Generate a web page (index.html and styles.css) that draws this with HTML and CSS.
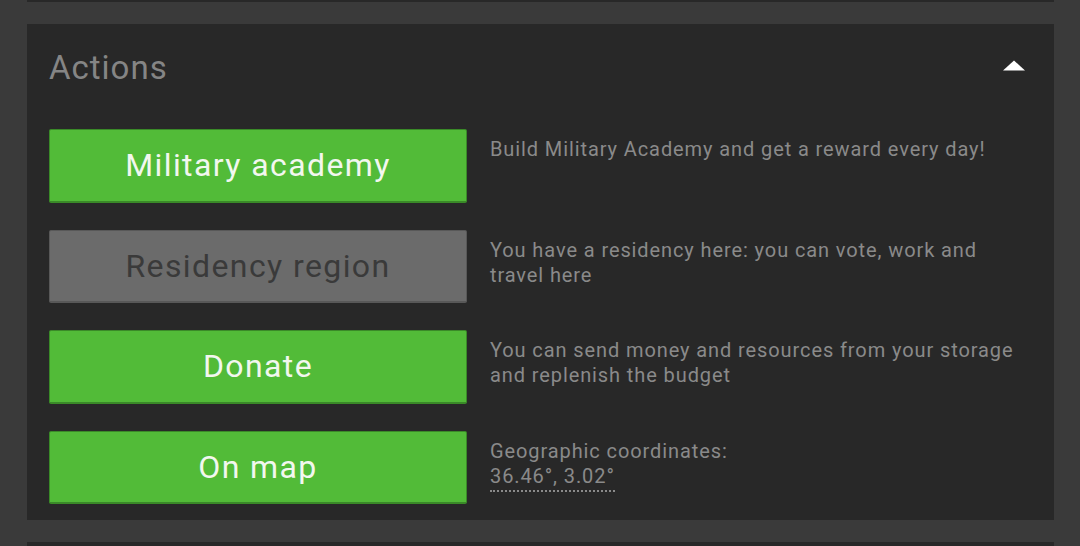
FILE: index.html
```html
<!DOCTYPE html>
<html lang="en">
<head>
<meta charset="utf-8">
<title>Actions</title>
<link rel="stylesheet" href="styles.css">
</head>
<body>
<div class="page">
  <div class="panel panel-prev"></div>
  <section class="panel card">
    <header class="card-head">
      <h2 class="card-title">Actions</h2>
      <svg class="toggle" width="22" height="11" viewBox="0 0 22 11" aria-hidden="true"><path d="M0 10.5 L11 0.5 L22 10.5 Z" fill="#ffffff"/></svg>
    </header>
    <div class="actions">
      <button class="btn btn-green">Military academy</button>
      <p class="desc">Build Military Academy and get a reward every day!</p>
      <button class="btn btn-gray">Residency region</button>
      <p class="desc">You have a residency here: you can vote, work and travel here</p>
      <button class="btn btn-green">Donate</button>
      <p class="desc">You can send money and resources from your storage and replenish the budget</p>
      <button class="btn btn-green">On map</button>
      <p class="desc">Geographic coordinates:<br><span class="coords">36.46°, 3.02°</span></p>
    </div>
  </section>
  <div class="panel panel-next"></div>
</div>
</body>
</html>
```
FILE: styles.css
```css
html, body {
  margin: 0;
  padding: 0;
  background: #3a3a3a;
  font-family: Roboto, "Liberation Sans", sans-serif;
}
.page {
  display: flex;
  flex-direction: column;
  gap: 22px;
  padding: 0 26px 0 27px;
  height: 546px;
  overflow: hidden;
}
.panel {
  background: #282828;
}
.panel-prev {
  height: 2px;
  flex: none;
}
.panel-next {
  height: 40px;
  flex: none;
}
.card {
  flex: none;
  padding: 0 22px 16px 22px;
}
.card-head {
  height: 86px;
  display: flex;
  align-items: center;
  justify-content: space-between;
}
.card-title {
  margin: 0;
  font-size: 33px;
  font-weight: 400;
  letter-spacing: 1px;
  color: #858585;
}
.toggle {
  margin-right: 7px;
  margin-top: -4px;
  display: block;
}
.actions {
  margin-top: 19px;
  display: grid;
  grid-template-columns: 418px 1fr;
  column-gap: 23px;
  row-gap: 27px;
  padding-right: 4px;
}
.btn {
  height: 73.5px;
  margin: 0;
  padding: 0;
  font-family: inherit;
  font-size: 32px;
  letter-spacing: 1.4px;
  border-radius: 2px;
  box-sizing: border-box;
}
.btn-green {
  background: #52bb38;
  color: #f2f7ef;
  border: 1px solid #3a8a28;
  border-bottom: 2px solid #3a8a28;
}
.btn-gray {
  background: #6b6b6b;
  color: #3a3a3a;
  border: 1px solid #585858;
  border-bottom: 2px solid #585858;
}
.desc {
  margin: 8px 0 0 0;
  font-size: 20px;
  line-height: 25px;
  letter-spacing: 0.9px;
  color: #8a8a8a;
}
.coords {
  border-bottom: 2px dotted #8a8a8a;
  padding-bottom: 2px;
}
```
